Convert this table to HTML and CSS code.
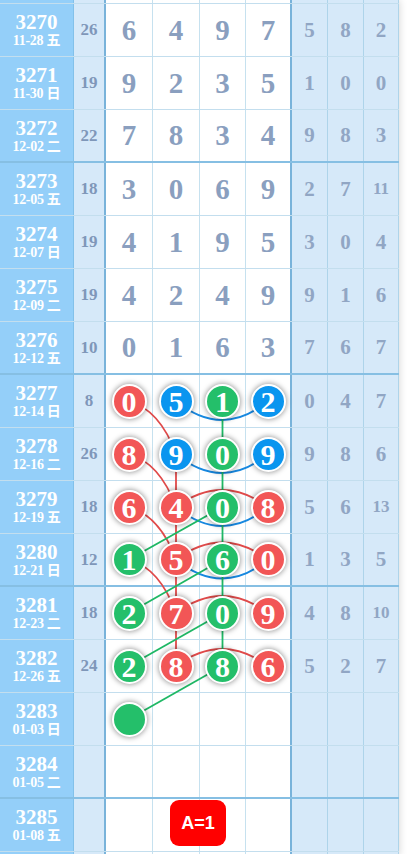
FILE: index.html
```html
<!DOCTYPE html>
<html>
<head>
  <meta charset="utf-8">
  <title>走势图</title>
  <link rel="stylesheet" href="styles.css">
</head>
<body>
  <div class="chart">
    <div class="row cut">
      <div class="cell issue"></div><div class="cell miss"></div>
      <div class="cell num"></div><div class="cell num"></div><div class="cell num"></div><div class="cell num last"></div>
      <div class="cell side"></div><div class="cell side"></div><div class="cell side"></div>
    </div>

    <div class="row">
      <div class="cell issue"><b>3270</b><span>11-28 五</span></div>
      <div class="cell miss">26</div>
      <div class="cell num">6</div><div class="cell num">4</div><div class="cell num">9</div><div class="cell num last">7</div>
      <div class="cell side">5</div><div class="cell side">8</div><div class="cell side">2</div>
    </div>
    <div class="row">
      <div class="cell issue"><b>3271</b><span>11-30 日</span></div>
      <div class="cell miss">19</div>
      <div class="cell num">9</div><div class="cell num">2</div><div class="cell num">3</div><div class="cell num last">5</div>
      <div class="cell side">1</div><div class="cell side">0</div><div class="cell side">0</div>
    </div>
    <div class="row end">
      <div class="cell issue"><b>3272</b><span>12-02 二</span></div>
      <div class="cell miss">22</div>
      <div class="cell num">7</div><div class="cell num">8</div><div class="cell num">3</div><div class="cell num last">4</div>
      <div class="cell side">9</div><div class="cell side">8</div><div class="cell side">3</div>
    </div>

    <div class="row">
      <div class="cell issue"><b>3273</b><span>12-05 五</span></div>
      <div class="cell miss">18</div>
      <div class="cell num">3</div><div class="cell num">0</div><div class="cell num">6</div><div class="cell num last">9</div>
      <div class="cell side">2</div><div class="cell side">7</div><div class="cell side two">11</div>
    </div>
    <div class="row">
      <div class="cell issue"><b>3274</b><span>12-07 日</span></div>
      <div class="cell miss">19</div>
      <div class="cell num">4</div><div class="cell num">1</div><div class="cell num">9</div><div class="cell num last">5</div>
      <div class="cell side">3</div><div class="cell side">0</div><div class="cell side">4</div>
    </div>
    <div class="row">
      <div class="cell issue"><b>3275</b><span>12-09 二</span></div>
      <div class="cell miss">19</div>
      <div class="cell num">4</div><div class="cell num">2</div><div class="cell num">4</div><div class="cell num last">9</div>
      <div class="cell side">9</div><div class="cell side">1</div><div class="cell side">6</div>
    </div>
    <div class="row end">
      <div class="cell issue"><b>3276</b><span>12-12 五</span></div>
      <div class="cell miss">10</div>
      <div class="cell num">0</div><div class="cell num">1</div><div class="cell num">6</div><div class="cell num last">3</div>
      <div class="cell side">7</div><div class="cell side">6</div><div class="cell side">7</div>
    </div>

    <div class="row">
      <div class="cell issue"><b>3277</b><span>12-14 日</span></div>
      <div class="cell miss">8</div>
      <div class="cell num"><i class="ball red">0</i></div><div class="cell num"><i class="ball blue">5</i></div><div class="cell num"><i class="ball green">1</i></div><div class="cell num last"><i class="ball blue">2</i></div>
      <div class="cell side">0</div><div class="cell side">4</div><div class="cell side">7</div>
    </div>
    <div class="row">
      <div class="cell issue"><b>3278</b><span>12-16 二</span></div>
      <div class="cell miss">26</div>
      <div class="cell num"><i class="ball red">8</i></div><div class="cell num"><i class="ball blue">9</i></div><div class="cell num"><i class="ball green">0</i></div><div class="cell num last"><i class="ball blue">9</i></div>
      <div class="cell side">9</div><div class="cell side">8</div><div class="cell side">6</div>
    </div>
    <div class="row">
      <div class="cell issue"><b>3279</b><span>12-19 五</span></div>
      <div class="cell miss">18</div>
      <div class="cell num"><i class="ball red">6</i></div><div class="cell num"><i class="ball red">4</i></div><div class="cell num"><i class="ball green">0</i></div><div class="cell num last"><i class="ball red">8</i></div>
      <div class="cell side">5</div><div class="cell side">6</div><div class="cell side two">13</div>
    </div>
    <div class="row end">
      <div class="cell issue"><b>3280</b><span>12-21 日</span></div>
      <div class="cell miss">12</div>
      <div class="cell num"><i class="ball green">1</i></div><div class="cell num"><i class="ball red">5</i></div><div class="cell num"><i class="ball green">6</i></div><div class="cell num last"><i class="ball red">0</i></div>
      <div class="cell side">1</div><div class="cell side">3</div><div class="cell side">5</div>
    </div>

    <div class="row">
      <div class="cell issue"><b>3281</b><span>12-23 二</span></div>
      <div class="cell miss">18</div>
      <div class="cell num"><i class="ball green">2</i></div><div class="cell num"><i class="ball red">7</i></div><div class="cell num"><i class="ball green">0</i></div><div class="cell num last"><i class="ball red">9</i></div>
      <div class="cell side">4</div><div class="cell side">8</div><div class="cell side two">10</div>
    </div>
    <div class="row">
      <div class="cell issue"><b>3282</b><span>12-26 五</span></div>
      <div class="cell miss">24</div>
      <div class="cell num"><i class="ball green">2</i></div><div class="cell num"><i class="ball red">8</i></div><div class="cell num"><i class="ball green">8</i></div><div class="cell num last"><i class="ball red">6</i></div>
      <div class="cell side">5</div><div class="cell side">2</div><div class="cell side">7</div>
    </div>
    <div class="row">
      <div class="cell issue"><b>3283</b><span>01-03 日</span></div>
      <div class="cell miss"></div>
      <div class="cell num"><i class="ball green"></i></div><div class="cell num"></div><div class="cell num"></div><div class="cell num last"></div>
      <div class="cell side"></div><div class="cell side"></div><div class="cell side"></div>
    </div>
    <div class="row end">
      <div class="cell issue"><b>3284</b><span>01-05 二</span></div>
      <div class="cell miss"></div>
      <div class="cell num"></div><div class="cell num"></div><div class="cell num"></div><div class="cell num last"></div>
      <div class="cell side"></div><div class="cell side"></div><div class="cell side"></div>
    </div>

    <div class="row">
      <div class="cell issue"><b>3285</b><span>01-08 五</span></div>
      <div class="cell miss"></div>
      <div class="cell num"></div><div class="cell num"></div><div class="cell num"></div><div class="cell num last"></div>
      <div class="cell side"></div><div class="cell side"></div><div class="cell side"></div>
      <div class="badge">A=1</div>
    </div>
    <div class="row cut">
      <div class="cell issue"></div><div class="cell miss"></div>
      <div class="cell num"></div><div class="cell num"></div><div class="cell num"></div><div class="cell num last"></div>
      <div class="cell side"></div><div class="cell side"></div><div class="cell side"></div>
    </div>

    <!-- connecting lines, drawn under the balls -->
    <svg class="links" width="399" height="860" viewBox="0 0 399 860">
      <g class="blue-line">
        <path d="M176 401 Q222 439 268 401"/>
        <path d="M176 454 Q222 492 268 454"/>
        <path d="M176 507 Q222 545 268 507"/>
        <path d="M176 559.5 Q222 597.5 268 559.5"/>
      </g>
      <g class="red-line">
        <path d="M129 401 Q160 410 176 454"/>
        <path d="M129 454 Q160 463 176 507"/>
        <path d="M129 507 Q160 516 176 559.5"/>
        <path d="M129 559.5 Q160 568.5 176 613"/>
        <path d="M176 454 V666"/>
        <path d="M176 507 Q222 473 268 507"/>
        <path d="M176 559.5 Q222 525.5 268 559.5"/>
        <path d="M176 613 Q222 579 268 613"/>
        <path d="M176 666 Q222 632 268 666"/>
      </g>
      <g class="green-line">
        <path d="M222.5 401 V666"/>
        <path d="M222.5 507 L129 559.5"/>
        <path d="M222.5 559.5 L129 613"/>
        <path d="M222.5 613 L129 666"/>
        <path d="M222.5 666 L129 719"/>
      </g>
    </svg>
  </div>
</body>
</html>
```

FILE: styles.css
```css
body {
  margin: 0;
  background: #fff;
  font-family: "Liberation Serif", "Noto Sans CJK SC", serif;
  overflow: hidden;
}

.chart {
  position: relative;
  width: 399px;
  box-shadow: 0 0 8px rgba(0, 0, 0, 0.18);
}

.row {
  position: relative;
  display: grid;
  grid-template-columns: 74px 32px 47px 47px 46px 46px 36px 36px 35px;
  height: 53px;
  box-sizing: border-box;
  border-bottom: 1px solid #c3deee;
}

.row.end {
  border-bottom: 2px solid #86bfe3;
}

.row.cut {
  height: 4px;
}

.cell {
  display: flex;
  align-items: center;
  justify-content: center;
  border-right: 1px solid #c6e1ef;
  font-weight: bold;
}

.issue {
  flex-direction: column;
  padding-top: 2px;
  background: #94cff9;
  border-right-color: #82c1ea;
  color: #fff;
}

.issue b {
  font-size: 21px;
  line-height: 20px;
}

.issue span {
  font-size: 14px;
  line-height: 18px;
  letter-spacing: -0.3px;
}

.miss {
  background: #d6e9f9;
  border-right: 2px solid #79b3da;
  color: #7f97b9;
  font-size: 17px;
}

.num {
  background: #fff;
  color: #8a9fbf;
  font-size: 29px;
}

.num.last {
  border-right: 2px solid #79b3da;
}

.side {
  background: #d6e9f9;
  border-right-color: #aed4ea;
  color: #91a6c4;
  font-size: 21px;
}

.side.two {
  font-size: 17px;
}

.ball {
  position: relative;
  z-index: 2;
  display: flex;
  align-items: center;
  justify-content: center;
  width: 31px;
  height: 31px;
  border: 2px solid #fff;
  border-radius: 50%;
  box-shadow: 0 0 5px 1px rgba(0, 0, 0, 0.35);
  color: #fff;
  font-style: normal;
  font-size: 30px;
  line-height: 31px;
}

.red {
  background: #f25656;
}

.blue {
  background: #0a95ef;
}

.green {
  background: #24bf6a;
}

.links {
  position: absolute;
  left: 0;
  top: 0;
  z-index: 1;
  pointer-events: none;
}

.links path {
  fill: none;
  stroke-width: 1.8;
}

.red-line path {
  stroke: #e04a4a;
}

.blue-line path {
  stroke: #1788e0;
}

.green-line path {
  stroke: #1fb865;
}

.badge {
  position: absolute;
  left: 170px;
  top: 1px;
  z-index: 2;
  display: flex;
  align-items: center;
  justify-content: center;
  width: 56px;
  height: 46px;
  border-radius: 9px;
  background: #ff0000;
  color: #fff;
  font-family: "Liberation Sans", Arial, sans-serif;
  font-weight: bold;
  font-size: 18px;
}
```
